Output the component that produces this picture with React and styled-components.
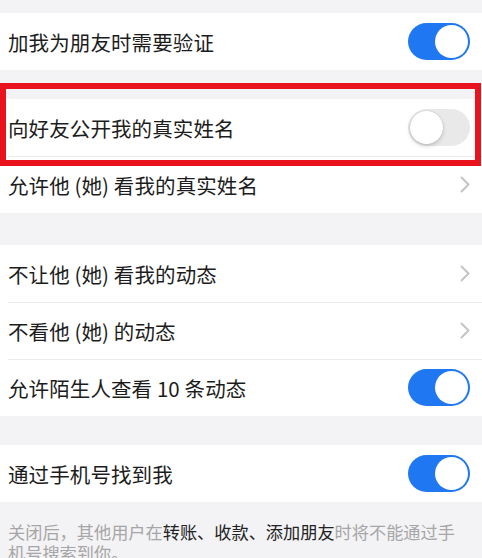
import styled, { createGlobalStyle } from 'styled-components';

const GlobalStyle = createGlobalStyle`
  html, body {
    margin: 0;
    padding: 0;
    background: #f3f2f5;
  }
  body {
    font-family: "Noto Sans CJK SC", "Noto Sans", sans-serif;
    -webkit-font-smoothing: antialiased;
  }
`

const Page = styled.div`
  width: 482px;
  height: 558px;
  overflow: hidden;
  background: #f3f2f5;
  padding-top: 13px;
  box-sizing: border-box;
  display: flex;
  flex-direction: column;
`

const Group = styled.section`
  background: #fff;
  display: flex;
  flex-direction: column;
  flex-shrink: 0;
  margin-bottom: ${p => p.$gap ?? 29}px;
`

const Row = styled.div`
  position: relative;
  height: 57px;
  display: flex;
  align-items: center;
  justify-content: space-between;
  padding: 0 12px 0 8px;
  box-sizing: border-box;

  & + & {
    &::before {
      content: '';
      position: absolute;
      top: 0;
      left: 8px;
      right: 0;
      height: 1px;
      background: #ececec;
    }
  }
`

const Label = styled.span`
  font-size: 20.5px;
  color: #1c1c1c;
  letter-spacing: 0.1px;
`

const Highlight = styled.div`
  position: absolute;
  left: 0;
  right: 1px;
  top: -16px;
  bottom: -10px;
  border: 6px solid #e8131c;
  pointer-events: none;
  z-index: 2;
`

const Track = styled.div`
  width: 62px;
  height: 37px;
  border-radius: 19px;
  box-sizing: border-box;
  display: flex;
  align-items: center;
  justify-content: ${p => (p.$on ? 'flex-end' : 'flex-start')};
  padding: 2px;
  background: ${p => (p.$on ? '#1f77f2' : '#e9e9ea')};
`

const Knob = styled.div`
  width: 33px;
  height: 33px;
  border-radius: 50%;
  background: #fff;
  box-sizing: border-box;
  box-shadow: ${p => (p.$on ? 'none' : '0 2px 4px rgba(0,0,0,0.18), 0 0 0 0.5px rgba(0,0,0,0.08)')};
`

const Chevron = styled.svg`
  width: 10px;
  height: 17px;
`

const Note = styled.p`
  margin: 0;
  padding: 19px 20px 0 8px;
  font-size: 17.2px;
  line-height: 21px;
  color: #a6a6a6;
`

const Strong = styled.span`
  color: #222;
`

function Switch({ on }) {
  return (
    <Track $on={on}>
      <Knob $on={on} />
    </Track>
  );
}

function Arrow() {
  return (
    <Chevron viewBox="0 0 10 17">
      <path d="M1.5 1.5 L8.5 8.5 L1.5 15.5" fill="none" stroke="#c4c4c8" strokeWidth="2" strokeLinecap="round" strokeLinejoin="round" />
    </Chevron>
  );
}

export default function App() {
  return (
    <Page>
      <GlobalStyle />
      <Group>
        <Row>
          <Label>加我为朋友时需要验证</Label>
          <Switch on />
        </Row>
      </Group>
      <Group $gap={32}>
        <Row>
          <Label>向好友公开我的真实姓名</Label>
          <Switch on={false} />
          <Highlight />
        </Row>
        <Row>
          <Label>允许他 (她) 看我的真实姓名</Label>
          <Arrow />
        </Row>
      </Group>
      <Group>
        <Row>
          <Label>不让他 (她) 看我的动态</Label>
          <Arrow />
        </Row>
        <Row>
          <Label>不看他 (她) 的动态</Label>
          <Arrow />
        </Row>
        <Row>
          <Label>允许陌生人查看 10 条动态</Label>
          <Switch on />
        </Row>
      </Group>
      <Group $gap={0}>
        <Row>
          <Label>通过手机号找到我</Label>
          <Switch on />
        </Row>
      </Group>
      <Note>
        关闭后，其他用户在<Strong>转账、收款、添加朋友</Strong>时将不能通过手机号搜索到你。
      </Note>
    </Page>
  );
}
